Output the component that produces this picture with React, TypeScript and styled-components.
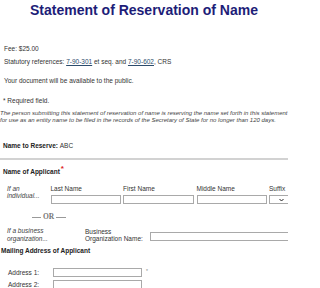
import React from "react";
import styled, { createGlobalStyle } from "styled-components";

const Global = createGlobalStyle`
  html, body { margin: 0; padding: 0; background: #fff; overflow: hidden; }
  body { font-family: "Liberation Sans", Arial, sans-serif; color: #333; }
`;

const Page = styled.div`
  width: 288px;
  height: 288px;
  overflow: hidden;
  font-size: 6.5px;
  line-height: 8px;
`;

const Title = styled.h1`
  margin: 0;
  padding-top: 2px;
  text-align: center;
  font-family: "Liberation Sans", Arial, sans-serif;
  font-size: 14px;
  line-height: 16px;
  font-weight: bold;
  color: #1d1d78;
  white-space: nowrap;
`;

const Line = styled.p<{ $mt: number; $ml?: number }>`
  margin: ${(p) => p.$mt}px 0 0 ${(p) => p.$ml ?? 4}px;
  white-space: nowrap;
`;

const Link = styled.a`
  color: #2c4c6c;
  text-decoration: underline;
`;

const Note = styled.p`
  margin: 5px 0 0 0;
  font-style: italic;
  font-size: 6px;
  line-height: 7px;
  color: #444;
  white-space: nowrap;
`;

const Heading = styled.div<{ $mt: number; $ml?: number }>`
  margin: ${(p) => p.$mt}px 0 0 ${(p) => p.$ml ?? 3}px;
  font-weight: bold;
  color: #222;
  white-space: nowrap;
`;

const Value = styled.span`
  font-weight: normal;
  color: #333;
`;

const Rule = styled.hr`
  margin: 8px 0 0 0;
  border: 0;
  border-top: 2px solid #d2d2d2;
`;

const Req = styled.sup`
  color: #d22;
  font-size: 8px;
  line-height: 0;
  vertical-align: 3px;
  margin-left: 1px;
`;

const PersonRow = styled.div`
  margin-top: 9px;
  display: grid;
  grid-template-columns: 41px 70px 71px 70px 40px;
  column-gap: 2.5px;
  padding-left: 7px;
`;

const Hint = styled.div<{ $lh?: number }>`
  font-style: italic;
  color: #444;
  line-height: ${(p) => p.$lh ?? 7}px;
  white-space: nowrap;
`;

const Field = styled.div`
  display: flex;
  flex-direction: column;
  gap: 2px;
  white-space: nowrap;
`;

const TextBox = styled.input<{ $w?: number }>`
  box-sizing: border-box;
  width: ${(p) => (p.$w ? `${p.$w}px` : "100%")};
  height: 9px;
  margin: 0;
  padding: 0;
  border: 1px solid #a9a9a9;
  background: #fff;
  outline: none;
`;

const SelectBox = styled.div`
  box-sizing: border-box;
  width: 26px;
  height: 9px;
  border: 1px solid #a9a9a9;
  display: flex;
  align-items: center;
  justify-content: flex-end;
  padding-right: 10px;
`;

const OrDivider = styled.div`
  margin: 9px 0 0 32px;
  display: flex;
  align-items: center;
  gap: 2px;
  font-family: "Liberation Serif", "Times New Roman", serif;
  font-weight: bold;
  font-size: 7.5px;
  color: #777;
  &::before, &::after {
    content: "";
    width: 9px;
    height: 1px;
    background: #999;
  }
  &::after { width: 10px; }
`;

const OrgRow = styled.div`
  margin-top: 6px;
  display: grid;
  grid-template-columns: 78px 65px 150px;
  padding-left: 7px;
  line-height: 8px;
`;

const OrgLabel = styled.div`
  white-space: nowrap;
  line-height: 7px;
  padding-top: 1px;
`;

const OrgInput = styled.div`
  padding-top: 5px;
`;

const AddressList = styled.div`
  margin-top: 13px;
  display: flex;
  flex-direction: column;
  gap: 3px;
  padding-left: 8px;
`;

const AddressRow = styled.div`
  display: grid;
  grid-template-columns: 45px 89px auto;
  align-items: center;
  white-space: nowrap;
`;

const Star = styled.span`
  align-self: start;
  color: #888;
  font-size: 5px;
  line-height: 6px;
  padding-left: 4px;
`;

export default function App() {
  return (
    <>
      <Global />
      <Page>
        <Title>Statement of Reservation of Name</Title>
        <Line $mt={27}>Fee: $25.00</Line>
        <Line $mt={5}>
          Statutory references: <Link>7-90-301</Link> et seq. and <Link>7-90-602</Link>, CRS
        </Line>
        <Line $mt={11}>Your document will be available to the public.</Line>
        <Line $mt={12} $ml={3}>* Required field.</Line>
        <Note>
          The person submitting this statement of reservation of name is reserving the name set forth in this statement
          <br />
          for use as an entity name to be filed in the records of the Secretary of State for no longer than 120 days.
        </Note>
        <Heading $mt={18}>
          Name to Reserve: <Value>ABC</Value>
        </Heading>
        <Rule />
        <Heading $mt={8}>
          Name of Applicant<Req>*</Req>
        </Heading>
        <PersonRow>
          <Hint>
            If an
            <br />
            individual...
          </Hint>
          <Field>
            Last Name
            <TextBox />
          </Field>
          <Field>
            First Name
            <TextBox />
          </Field>
          <Field>
            Middle Name
            <TextBox />
          </Field>
          <Field>
            Suffix
            <SelectBox>
              <svg width="5" height="4" viewBox="0 0 10 8">
                <path d="M1 2 L5 6 L9 2" fill="none" stroke="#222" strokeWidth="2" />
              </svg>
            </SelectBox>
          </Field>
        </PersonRow>
        <OrDivider>OR</OrDivider>
        <OrgRow>
          <Hint $lh={8}>
            If a business
            <br />
            organization...
          </Hint>
          <OrgLabel>
            Business
            <br />
            Organization Name:
          </OrgLabel>
          <OrgInput>
            <TextBox $w={142} />
          </OrgInput>
        </OrgRow>
        <Heading $mt={4} $ml={1}>Mailing Address of Applicant</Heading>
        <AddressList>
          <AddressRow>
            <span>Address 1:</span>
            <TextBox />
            <Star>*</Star>
          </AddressRow>
          <AddressRow>
            <span>Address 2:</span>
            <TextBox />
          </AddressRow>
        </AddressList>
      </Page>
    </>
  );
}
